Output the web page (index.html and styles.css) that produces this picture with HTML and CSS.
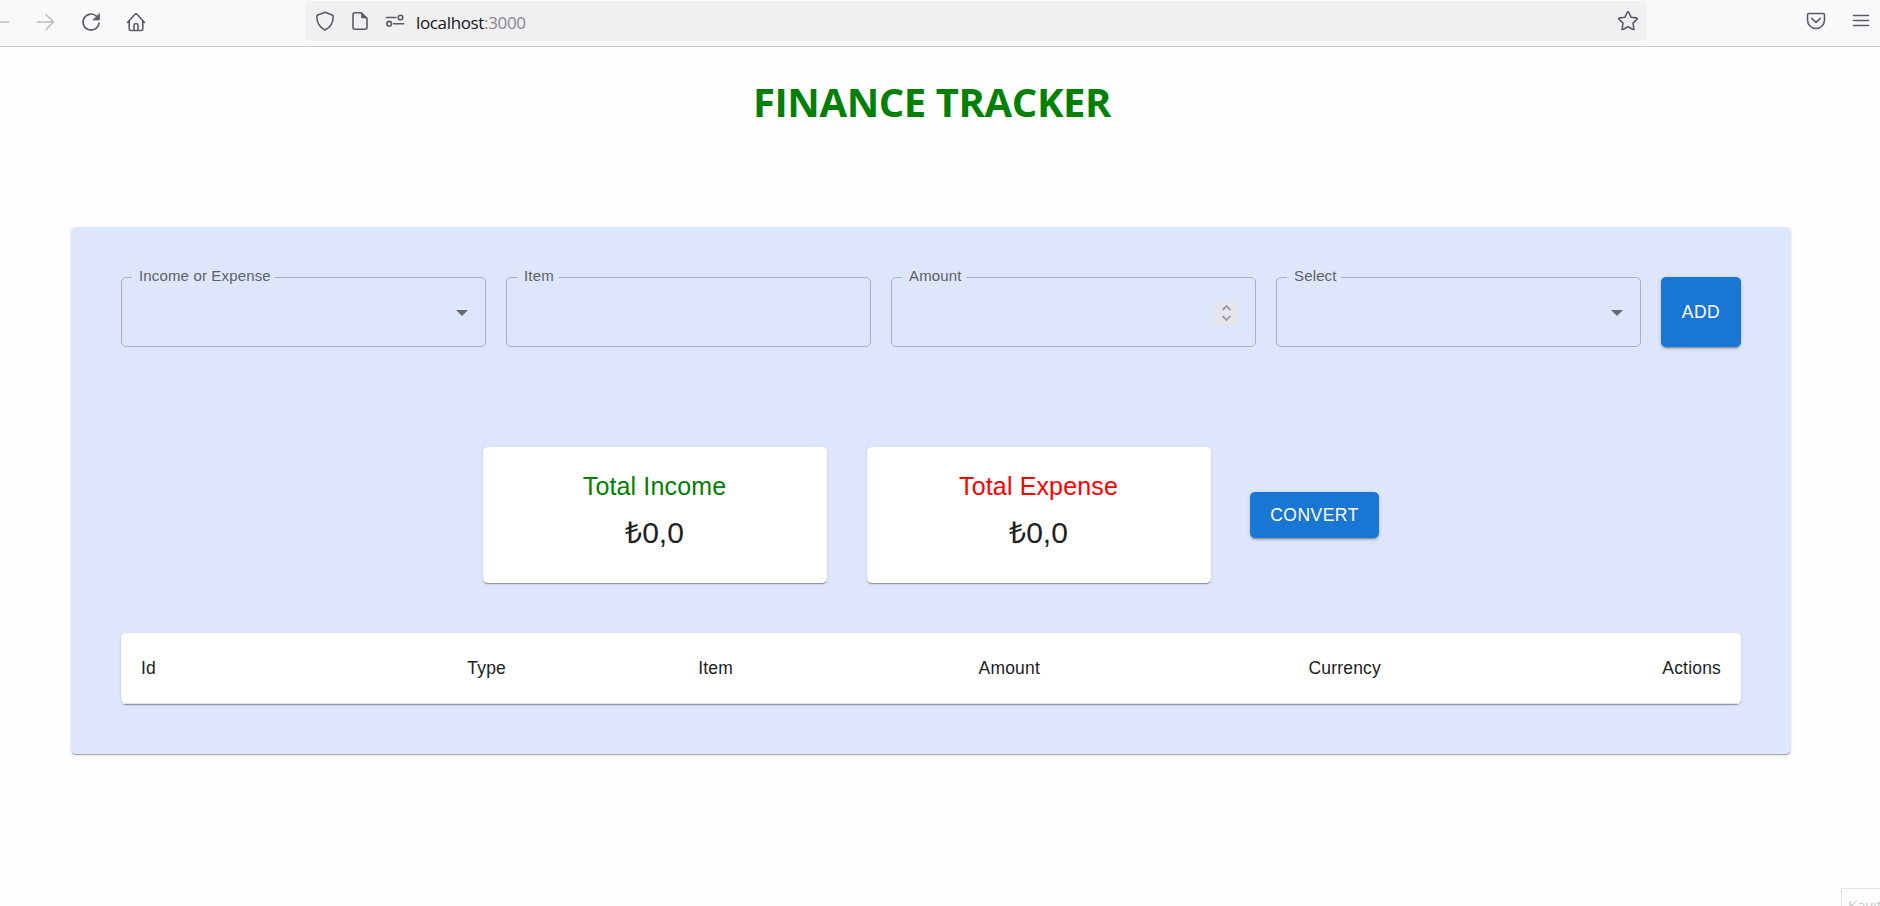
FILE: index.html
```html
<!DOCTYPE html>
<html lang="tr">
<head>
<meta charset="utf-8">
<title>Finance Tracker</title>
<link rel="stylesheet" href="styles.css">
</head>
<body>
<header class="toolbar">
  <div class="nav">
    <svg class="ico dim" width="20" height="20" viewBox="0 0 20 20"><path d="M17.500 10H1M8.500 2.500L1 10l7.500 7.500"/></svg>
    <svg class="ico dim" width="20" height="20" viewBox="0 0 20 20"><path d="M1.500 10H17.500M10 2.500L17.500 10l-7.500 7.500"/></svg>
    <svg class="ico" width="20" height="20" viewBox="0 0 20 20"><path d="M15.800 4.500A8 8 0 1 0 18 11"/><path class="solid" d="M18.500 1.500V8H12z"/></svg>
    <svg class="ico" width="20" height="20" viewBox="0 0 20 20"><path d="M1.500 10.500L9 2.300q1-1 2 0l7.500 8.200M3.200 9v8q0 1.500 1.500 1.500h10.600q1.500 0 1.500-1.500V9M8 18v-5q0-1.200 1.200-1.200h1.600q1.200 0 1.200 1.200v5"/></svg>
  </div>
  <div class="urlbar">
    <svg class="ico shield" width="20" height="20" viewBox="0 0 20 20"><path d="M10 1.200l7.200 2.700q1 .4 1 1.400c0 6-2.700 11.200-8.200 13.600C4.500 16.500 1.800 11.300 1.800 5.300q0-1 1-1.400z"/></svg>
    <svg class="ico page" width="20" height="20" viewBox="0 0 20 20"><path d="M11 1.800H5q-2 0-2 2v12.400q0 2 2 2h10q2 0 2-2V7.500z"/><path class="solid" d="M11.500 1.800V7H17z"/></svg>
    <svg class="ico perms" width="20" height="20" viewBox="0 0 20 20"><path d="M1.500 6.500H11M8.500 12.700H18.500"/><circle cx="15.500" cy="6.500" r="2.300"/><circle cx="4.200" cy="12.700" r="2.300"/></svg>
    <span class="url">localhost<span class="port">:3000</span></span>
    <svg class="ico star" width="22" height="22" viewBox="0 0 22 22"><path d="M10.200 2.500q.8-1.500 1.600 0l2.200 4.700 5.300.7q1.600.3.500 1.500L16 13.100l.9 5.300q.2 1.700-1.300.9L11 16.800l-4.600 2.500q-1.500.8-1.300-.9l.9-5.300-3.800-3.700q-1.100-1.200.5-1.500l5.300-.7z"/></svg>
  </div>
  <div class="tools">
    <svg class="ico" width="20" height="20" viewBox="0 0 20 20"><path d="M3 2.500h14q1.500 0 1.500 1.500v5a8.500 8.500 0 0 1-17 0V4q0-1.500 1.500-1.500zM5.700 7.300l4.300 4 4.300-4"/></svg>
    <svg class="ico" width="20" height="20" viewBox="0 0 20 20"><path d="M2.500 4.500h15M2.500 9.500h15M2.500 14.500h15"/></svg>
  </div>
</header>
<main class="page-body">
  <h1 class="title">FINANCE TRACKER</h1>
  <section class="panel">
    <form class="form">
      <fieldset class="field"><legend class="label"><span class="label-text">Income or Expense</span></legend>
        <div class="control select"><svg width="12" height="6" viewBox="0 0 12 6"><path fill="#666a76" d="M0 0h12L6 6z"/></svg></div></fieldset>
      <fieldset class="field"><legend class="label"><span class="label-text">Item</span></legend><div class="control"></div></fieldset>
      <fieldset class="field"><legend class="label"><span class="label-text">Amount</span></legend>
        <div class="control number"><span class="spinner"><svg width="23" height="22" viewBox="0 0 23 22"><path d="M7.500 8l4-4 4 4M7.500 14l4 4 4-4" fill="none" stroke="#9d9da5" stroke-width="1.800"/></svg></span></div></fieldset>
      <fieldset class="field"><legend class="label"><span class="label-text">Select</span></legend>
        <div class="control select"><svg width="12" height="6" viewBox="0 0 12 6"><path fill="#666a76" d="M0 0h12L6 6z"/></svg></div></fieldset>
      <button class="btn add" type="button">ADD</button>
    </form>
    <div class="totals">
      <article class="card"><h2 class="card-title income">Total Income</h2><p class="sum">₺0,0</p></article>
      <article class="card"><h2 class="card-title expense">Total Expense</h2><p class="sum">₺0,0</p></article>
      <button class="btn convert" type="button">CONVERT</button>
    </div>
    <table class="table">
      <colgroup><col class="c-id"><col class="c-type"><col class="c-item"><col class="c-amount"><col class="c-currency"><col class="c-actions"></colgroup>
      <thead><tr><th>Id</th><th>Type</th><th>Item</th><th>Amount</th><th>Currency</th><th>Actions</th></tr></thead>
    </table>
  </section>
</main>
<div class="toast">Kayıt</div>
</body>
</html>
```
FILE: styles.css
```css
* { box-sizing: border-box; }
body {
  margin: 0;
  height: 906px;
  overflow: hidden;
  background: #fefefe;
  color: #212121;
  font-family: "Liberation Sans", Arial, sans-serif;
}
.toolbar {
  display: flex;
  height: 47px;
  padding-top: 1px;
  background: #f9f9fb;
  border-bottom: 1px solid #c9c9ce;
}
.ico {
  display: block;
  flex: none;
  fill: none;
  stroke: #5b5b66;
  stroke-width: 1.6;
  stroke-linecap: round;
  stroke-linejoin: round;
}
.ico.dim { stroke: #bdbdc2; }
.ico .solid { fill: #5b5b66; stroke-width: .6; }
.nav {
  display: flex;
  gap: 25px;
  width: 305px;
  height: 40px;
  padding-top: 11px;
  margin-left: -9px;
  margin-right: 9px;
}
.urlbar {
  display: flex;
  width: 1342px;
  height: 40px;
  padding: 10px 8px 0 10px;
  background: #f0f0f2;
  border-radius: 5px;
}
.page { margin-left: 15px; }
.perms { margin-left: 15px; }
.url {
  margin-left: 11px;
  font: 17px/24px "Open Sans", "Noto Sans", sans-serif;
  letter-spacing: -.35px;
  color: #15141a;
}
.port { color: #86868d; }
.star { margin-left: auto; margin-top: -1px; }
.tools { display: flex; gap: 25px; padding: 10px 0 0 159px; }
.page-body { padding: 0 89px 0 71px; }
.title {
  margin: 27px 0 98px;
  padding-left: 2px;
  text-align: center;
  color: #008000;
  font: 700 40px/55px "Open Sans", "Noto Sans", sans-serif;
  letter-spacing: -.4px;
}
.panel {
  height: 527px;
  padding: 50px;
  background: #dee6fc;
  border-radius: 5px;
  box-shadow: 0 2px 1px -1px rgba(0,0,0,.2), 0 1px 1px rgba(0,0,0,.14), 0 1px 3px rgba(0,0,0,.12);
}
.form { display: flex; gap: 20px; height: 70px; }
.field {
  flex: 1;
  min-width: 0;
  height: 79px;
  margin: -9px 0 0;
  padding: 0 17px 0 10px;
  border: 1px solid #abb1c3;
  border-radius: 5px;
}
.label {
  height: 18px;
  padding: 0 4px 0 7px;
  font-size: 15px;
  line-height: 16px;
  letter-spacing: .15px;
  color: #5c6169;
}
.control { display: flex; justify-content: flex-end; align-items: center; height: 53px; }
.spinner { display: flex; background: #e7e7eb; }
.btn {
  border: 0;
  border-radius: 5px;
  padding: 0;
  background: #1976d2;
  color: #fff;
  font: 17.5px "Liberation Sans", Arial, sans-serif;
  letter-spacing: .5px;
  box-shadow: 0 3px 1px -2px rgba(0,0,0,.2), 0 2px 2px rgba(0,0,0,.14), 0 1px 5px rgba(0,0,0,.12);
}
.add { width: 80px; height: 70px; }
.totals {
  display: flex;
  gap: 40px;
  align-items: center;
  margin: 100px 0 50px 362px;
}
.card {
  width: 344px;
  height: 136px;
  padding: 19px 1px 0 0;
  text-align: center;
  background: #fff;
  border-radius: 5px;
  box-shadow: 0 2px 1px -1px rgba(0,0,0,.2), 0 1px 1px rgba(0,0,0,.14), 0 1px 3px rgba(0,0,0,.12);
}
.card-title { margin: 0; font-size: 25px; font-weight: 400; line-height: 40px; letter-spacing: .14px; }
.income { color: #008000; }
.expense { color: #f00; }
.sum { margin: 4px 0 0; font-size: 30px; line-height: 45px; }
.convert { width: 129px; height: 46px; margin-left: -1px; }
.table {
  width: 100%;
  height: 71px;
  table-layout: fixed;
  border-spacing: 0;
  background: #fff;
  border-radius: 5px;
  box-shadow: 0 2px 1px -1px rgba(0,0,0,.2), 0 1px 1px rgba(0,0,0,.14), 0 1px 3px rgba(0,0,0,.12);
}
.table th {
  padding: 0 20px;
  border-bottom: 1px solid #e0e0e0;
  font-size: 17.5px;
  font-weight: 400;
  text-align: right;
  letter-spacing: .19px;
}
.table th:first-child { text-align: left; }
.c-id { width: 180px; }
.c-type { width: 225px; }
.c-item { width: 227px; }
.c-amount { width: 307px; }
.c-currency { width: 341px; }
.toast {
  position: absolute;
  left: 1841px;
  top: 888px;
  width: 60px;
  height: 30px;
  padding: 6px 0 0 6px;
  border: 1px solid #e3e3ea;
  color: #c9c9c9;
  font: 15px/20px "Open Sans", "Noto Sans", sans-serif;
}
```
